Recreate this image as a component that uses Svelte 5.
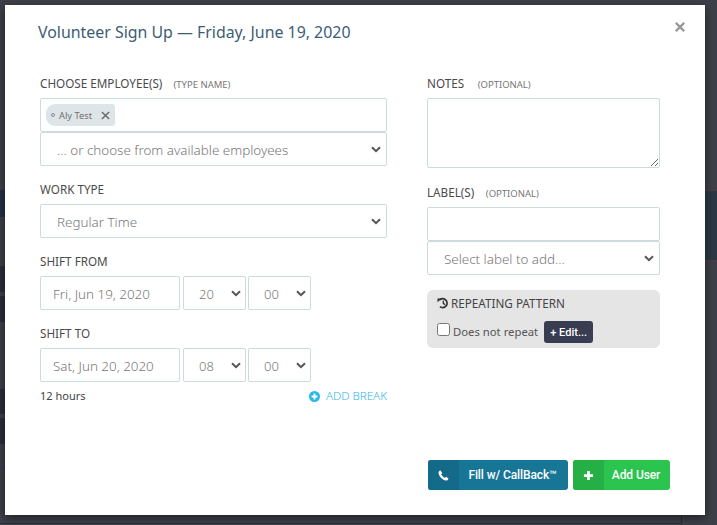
<script>
  const hours = ['08', '20'];
  // dim rows of the page behind the modal: [left, top, width, height, colour]
  const behind = [
    [0, 190, 5, 27, '#253048'],
    [0, 266, 5, 26, '#2b2e38'],
    [0, 296, 5, 26, '#2b2e38'],
    [0, 389, 5, 25, '#2b2e38'],
    [0, 418, 5, 26, '#2b2e38'],
    [0, 468, 5, 1, '#2c3c5c'],
    [705, 190, 12, 70, '#2b3945'],
    [705, 190, 12, 1, '#57394a'],
    [705, 260, 12, 1, '#57394a'],
    [0, 523, 681, 1, '#2a2d33'],
    [681, 515, 1, 9, '#2a2d33'],
  ];
</script>

<div class="page">
  {#each behind as [l, t, w, h, c]}
    <i class="bit" style="left:{l}px;top:{t}px;width:{w}px;height:{h}px;background:{c}"></i>
  {/each}

  <div class="modal">
    <button class="close" aria-label="Close">
      <svg viewBox="0 0 12 12" width="12" height="12"><path d="M2.600 1 6 4.200 9.400 1 11 2.600 7.800 6 11 9.400 9.400 11 6 7.800 2.600 11 1 9.400 4.200 6 1 2.600Z" fill="#999" /></svg>
    </button>
    <h1>Volunteer Sign Up — Friday, June 19, 2020</h1>

    <div class="columns">
      <div class="col main">
        <label class="lbl first" for="emp">CHOOSE EMPLOYEE(S) <small>(TYPE NAME)</small></label>
        <div class="tags" id="emp">
          <span class="tag"><i class="dot"></i>Aly Test
            <svg viewBox="0 0 10 10" width="9" height="9"><path d="M1 1 9 9M9 1 1 9" stroke="#666" stroke-width="1.500" /></svg>
          </span>
        </div>
        <div class="select"><span>... or choose from available employees</span>{@render chevron()}</div>

        <div class="lbl gap">WORK TYPE</div>
        <div class="select"><span>Regular Time</span>{@render chevron()}</div>

        <div class="lbl gap">SHIFT FROM</div>
        <div class="when">
          <div class="date">Fri, Jun 19, 2020</div>
          <div class="select small"><span>{hours[1]}</span>{@render chevron()}</div>
          <div class="select small"><span>00</span>{@render chevron()}</div>
        </div>

        <div class="lbl gap">SHIFT TO</div>
        <div class="when">
          <div class="date">Sat, Jun 20, 2020</div>
          <div class="select small"><span>{hours[0]}</span>{@render chevron()}</div>
          <div class="select small"><span>00</span>{@render chevron()}</div>
        </div>

        <div class="under">
          <span class="hours">12 hours</span>
          <span class="add-break">
            <svg viewBox="0 0 12 12" width="11" height="11"><circle cx="6" cy="6" r="6" fill="#2bb8e6" /><path d="M6 2.800v6.400M2.800 6h6.400" stroke="#fff" stroke-width="2" /></svg>
            ADD BREAK
          </span>
        </div>
      </div>

      <div class="col side">
        <label class="lbl first" for="notes">NOTES <small class="far">(OPTIONAL)</small></label>
        <textarea id="notes"></textarea>

        <div class="lbl gap2">LABEL(S) <small>(OPTIONAL)</small></div>
        <div class="box"></div>
        <div class="select"><span>Select label to add...</span>{@render chevron()}</div>

        <div class="repeat">
          <div class="repeat-title">
            <svg viewBox="0 0 12 12" width="12" height="12"><path d="M2.900 2.700A4.400 4.400 0 1 1 2.900 9.600" fill="none" stroke="#333" stroke-width="1.800" /><path d="M.4 1.400H4.800L.6 5.200Z" fill="#333" /><path d="M6.300 3.600V6.400L8 7.600" fill="none" stroke="#333" stroke-width="1.300" /></svg>
            REPEATING PATTERN
          </div>
          <div class="repeat-row">
            <input type="checkbox" />
            <span>Does not repeat</span>
            <button class="edit">+ Edit...</button>
          </div>
        </div>
      </div>
    </div>

    <div class="actions">
      <button class="act blue">
        <span class="ico">
          <svg viewBox="0 0 12 12" width="11" height="11"><path d="M2.800.6 4.600 3.200 3.500 4.600C4 6 6 8 7.400 8.500L8.800 7.400 11.400 9.200C11.200 10.600 10 11.500 8.800 11.400 4.800 10.800 1.200 7.200.6 3.200.5 2 1.400.8 2.800.6Z" fill="#fff" /></svg>
        </span>
        <span class="txt">Fill w/ CallBack™</span>
      </button>
      <button class="act green">
        <span class="ico">
          <svg viewBox="0 0 12 12" width="11" height="11"><path d="M6 1v10M1 6h10" stroke="#fff" stroke-width="3" /></svg>
        </span>
        <span class="txt">Add User</span>
      </button>
    </div>
  </div>
</div>

{#snippet chevron()}
  <svg class="chev" viewBox="0 0 10 7" width="10" height="7"><path d="M1 1.200 5 5.200 9 1.200" fill="none" stroke="#555" stroke-width="2" /></svg>
{/snippet}

<style>
  :global(body) {
    margin: 0;
    background: #3d4048;
  }

  .page {
    position: relative;
    width: 717px;
    height: 525px;
    overflow: hidden;
    background: #3d4048;
    font-family: "Noto Sans", "Open Sans", sans-serif;
  }

  .bit {
    position: absolute;
    display: block;
  }

  .modal {
    position: relative;
    box-sizing: border-box;
    width: 700px;
    height: 510px;
    margin: 5px 0 0 5px;
    padding: 16px 35px 0 33px;
    background: #fff;
    box-shadow: 0 3px 9px rgba(0, 0, 0, 0.5);
  }

  .close {
    position: absolute;
    top: 16px;
    right: 19px;
    padding: 0;
    border: 0;
    background: none;
    line-height: 0;
  }

  h1 {
    margin: 0;
    font-size: 15.9px;
    line-height: 22px;
    font-weight: 400;
    color: #3d5d74;
  }

  .columns {
    display: flex;
    gap: 40px;
    margin-top: 32px;
    padding-left: 2px;
  }

  .col.main { width: 347px; }
  .col.side { width: 233px; }

  .lbl {
    display: block;
    font-size: 11.7px;
    line-height: 16px;
    color: #4a4a4a;
    margin-bottom: 7px;
  }
  .lbl.first { margin-bottom: 5px; }
  .lbl small {
    font-size: 9.5px;
    color: #777;
    margin-left: 8px;
  }
  .lbl small.far { margin-left: 10.5px; }
  .lbl.gap { margin-top: 15px; }
  .lbl.gap2 { margin-top: 16px; margin-bottom: 5px; }
  .lbl.gap2 small { margin-left: 8.5px; }

  .tags, .box, .select, .date, textarea {
    box-sizing: border-box;
    border: 1px solid #ccdbdb;
    border-radius: 2px;
    background: #fff;
  }

  .tags {
    display: flex;
    align-items: flex-start;
    height: 34px;
    padding: 5px;
  }

  .box { height: 34px; }

  .tag {
    display: flex;
    align-items: center;
    height: 22px;
    padding: 0 5px;
    background: #dde5e8;
    border-radius: 9px 3px 3px 9px;
    font-size: 9.3px;
    color: #707070;
  }
  .tag svg { margin-left: 9px; }

  .dot {
    width: 2px;
    height: 2px;
    border: 1px solid #889;
    border-radius: 50%;
    margin-right: 4px;
  }

  .select {
    display: flex;
    align-items: center;
    justify-content: space-between;
    height: 34px;
    padding: 0 5px 0 16px;
    font-size: 13.4px;
    font-weight: 300;
    color: #777;
  }
  .select span { padding-top: 2px; }

  .when {
    display: flex;
    gap: 3px;
  }

  .date {
    width: 140px;
    height: 34px;
    padding: 0 12px;
    font-size: 13.4px;
    font-weight: 300;
    line-height: 34px;
    color: #777;
  }

  .select.small {
    width: 63px;
    padding: 0 4px 0 15px;
    font-size: 13px;
  }
  .select.small + .select.small { margin-left: -1px; }

  .under {
    display: flex;
    justify-content: space-between;
    margin-top: 6px;
    font-size: 11px;
    line-height: 16px;
  }
  .hours { color: #444; }
  .add-break {
    display: flex;
    align-items: center;
    gap: 6px;
    font-size: 11.6px;
    font-weight: 300;
    color: #2bb8e6;
  }

  textarea {
    display: block;
    width: 233px;
    height: 70px;
    margin: 0;
  }

  .repeat {
    box-sizing: border-box;
    height: 58px;
    margin-top: 15px;
    padding: 5px 10px;
    background: #e5e5e5;
    border-radius: 6px;
  }
  .repeat-title {
    display: flex;
    align-items: center;
    gap: 2px;
    font-size: 11.7px;
    line-height: 16px;
    color: #444;
  }
  .repeat-row {
    display: flex;
    align-items: center;
    margin-top: 10px;
    font-size: 11.3px;
    color: #555;
  }
  .repeat-row input {
    width: 13px;
    height: 13px;
    margin: 0 3px 5px 0;
  }
  .repeat-row span { margin-bottom: 2px; }
  .edit {
    margin-left: 6px;
    width: 49px;
    height: 22px;
    padding: 0;
    border: 0;
    border-radius: 3px;
    background: #383d52;
    color: #fff;
    font: 500 11px Roboto, sans-serif;
  }

  .actions {
    position: absolute;
    top: 455px;
    left: 423px;
    display: flex;
    gap: 5px;
  }

  .act {
    display: flex;
    height: 30px;
    padding: 0;
    border: 0;
    border-radius: 3px;
    overflow: hidden;
    color: #fff;
    font: 500 12px Roboto, sans-serif;
    letter-spacing: -0.1px;
  }
  .ico {
    display: flex;
    align-items: center;
    justify-content: center;
    width: 31px;
  }
  .txt {
    flex: 1;
    display: flex;
    align-items: center;
    justify-content: center;
  }
  .blue { width: 140px; background: #177596; }
  .blue .ico { background: #136b89; }
  .blue .txt { padding-right: 2px; }
  .green { width: 97px; background: #2bc44f; }
  .green .ico { background: #25af45; }
  .green .txt { padding-right: 2px; }
</style>
